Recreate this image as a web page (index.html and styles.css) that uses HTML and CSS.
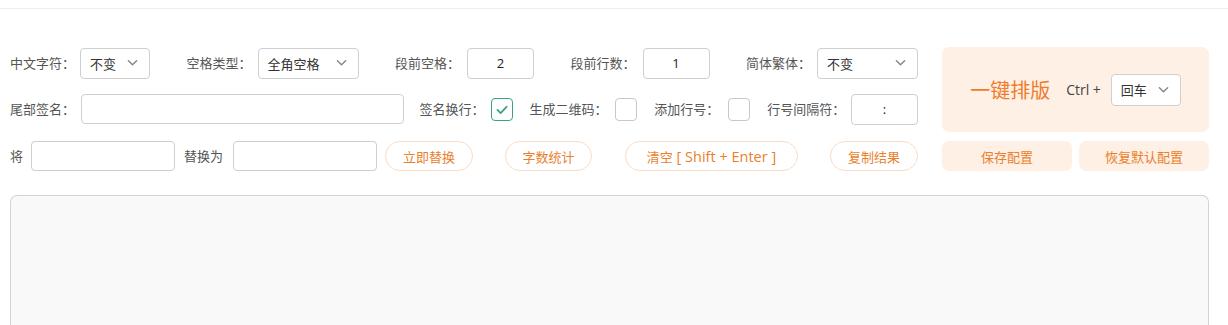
FILE: index.html
```html
<!DOCTYPE html>
<html lang="zh">
<head>
<meta charset="utf-8">
<link rel="stylesheet" href="styles.css">
</head>
<body>
<div class="topbar"></div>
<div class="main">
  <div class="left">
    <div class="row row1">
      <div class="grp g1"><span class="lbl">中文字符：</span><div class="sel w70"><span>不变</span><svg class="chev" viewBox="0 0 12 8"><path d="M1.5 1.5 L6 6 L10.5 1.5" /></svg></div></div>
      <div class="grp g2"><span class="lbl">空格类型：</span><div class="sel w101"><span>全角空格</span><svg class="chev" viewBox="0 0 12 8"><path d="M1.5 1.5 L6 6 L10.5 1.5" /></svg></div></div>
      <div class="grp g3"><span class="lbl">段前空格：</span><div class="inp num w67">2</div></div>
      <div class="grp g3"><span class="lbl">段前行数：</span><div class="inp num w67">1</div></div>
      <div class="grp g2"><span class="lbl">简体繁体：</span><div class="sel w101"><span>不变</span><svg class="chev" viewBox="0 0 12 8"><path d="M1.5 1.5 L6 6 L10.5 1.5" /></svg></div></div>
    </div>
    <div class="row row2">
      <span class="lbl l71">尾部签名：</span><div class="inp sig"></div>
      <span class="lbl l72 ml16">签名换行：</span><div class="cb checked"><svg viewBox="0 0 22 22"><path d="M6 11.5 L9.5 15 L16 8" /></svg></div>
      <span class="lbl l86 ml16">生成二维码：</span><div class="cb"></div>
      <span class="lbl l74 ml17">添加行号：</span><div class="cb"></div>
      <span class="lbl l84 ml17">行号间隔符：</span><div class="inp num w67">:</div>
    </div>
    <div class="row row3">
      <span class="lbl l21">将</span><div class="inp w144"></div>
      <span class="lbl l49 ml9">替换为</span><div class="inp w144"></div>
      <div class="pill ml8 w88">立即替换</div>
      <div class="pill ml32 w87">字数统计</div>
      <div class="pill ml33 w173">清空<span class="latin">&nbsp;[ Shift + Enter ]</span></div>
      <div class="pill ml32 w88">复制结果</div>
    </div>
  </div>
  <div class="right">
    <div class="panel">
      <span class="big">一键排版</span>
      <span class="ctrl">Ctrl +</span>
      <div class="sel w70 white"><span>回车</span><svg class="chev" viewBox="0 0 12 8"><path d="M1.5 1.5 L6 6 L10.5 1.5" /></svg></div>
    </div>
    <div class="btns">
      <div class="sbtn">保存配置</div>
      <div class="sbtn">恢复默认配置</div>
    </div>
  </div>
</div>
<div class="editor"></div>
</body>
</html>
```
FILE: styles.css
```css
* { box-sizing: border-box; }
html, body { margin: 0; padding: 0; background: #fff; }
body {
  font-family: "Open Sans", "Noto Sans CJK SC", sans-serif;
  font-size: 13px;
  color: #555;
  width: 1228px;
  height: 325px;
  overflow: hidden;
}
.topbar { height: 9px; border-bottom: 1px solid #eeeeee; }
.main {
  display: flex;
  padding: 38px 0 0 10px;
  gap: 24px;
}
.left { width: 908px; display: flex; flex-direction: column; }
.row { display: flex; align-items: center; height: 32px; }
.row1 { justify-content: space-between; }
.row2 { margin-top: 14px; }
.row3 { margin-top: 15px; }
.grp { display: flex; align-items: center; }
.g1 { width: 140px; }
.g2 { width: 172px; }
.g3 { width: 139px; }
.grp .lbl { flex: 1; }
.lbl { white-space: nowrap; color: #555; line-height: 20px; }
.l71 { width: 71px; } .l72 { width: 72px; } .l86 { width: 86px; }
.l74 { width: 74px; } .l84 { width: 84px; } .l21 { width: 21px; } .l49 { width: 49px; }
.ml8 { margin-left: 8px; } .ml9 { margin-left: 9px; } .ml16 { margin-left: 16px; } .ml17 { margin-left: 17px; }
.ml32 { margin-left: 32px; } .ml33 { margin-left: 33px; }
.sel, .inp {
  height: 31px;
  border: 1px solid #cfcfcf;
  border-radius: 4px;
  background: #fff;
  display: flex;
  align-items: center;
  color: #333;
  font-size: 13px;
}
.sel { justify-content: space-between; padding: 0 11px 0 9px; }
.chev { width: 11px; height: 8px; }
.chev path { fill: none; stroke: #888; stroke-width: 1.6; stroke-linecap: round; stroke-linejoin: round; }
.num { justify-content: center; color: #222; }
.w70 { width: 70px; } .w101 { width: 101px; } .w67 { width: 67px; }
.w144 { width: 144px; } .w88 { width: 88px; } .w87 { width: 87px; } .w173 { width: 173px; }
.sig { width: 323px; height: 30px; }
.cb {
  width: 22px; height: 23px;
  border: 1px solid #c8c8c8;
  border-radius: 4px;
  background: #fff;
}
.cb.checked { border: 1.5px solid #3aa37f; }
.cb svg { width: 100%; height: 100%; display: block; }
.cb svg path { fill: none; stroke: #3aa37f; stroke-width: 2; stroke-linecap: round; stroke-linejoin: round; }
.row3 .inp { height: 30px; }
.pill {
  height: 30px;
  border: 1px solid #fbdcc4;
  border-radius: 15px;
  color: #ea7f2c;
  display: flex; align-items: center; justify-content: center;
  font-size: 13px;
  white-space: nowrap;
}
.latin { font-size: 14.5px; }
.right { width: 267px; display: flex; flex-direction: column; }
.panel {
  height: 85px;
  background: #fff0e6;
  border-radius: 7px;
  display: flex; align-items: center; justify-content: center;
}
.big { font-size: 20px; color: #f07b2b; margin-right: 16px; }
.ctrl { font-size: 14px; color: #444; margin-right: 10px; }
.panel .sel { height: 32px; }
.btns { display: flex; gap: 7px; margin-top: 9px; }
.sbtn {
  flex: 1;
  height: 30px;
  background: #fff0e6;
  border-radius: 7px;
  color: #ea7f2c;
  display: flex; align-items: center; justify-content: center;
  font-size: 13px;
}
.editor {
  margin: 23px 0 0 10px;
  width: 1199px;
  height: 130px;
  background: #f9f9f9;
  border: 1px solid #d3d3d3;
  border-bottom: 0;
  border-radius: 7px 7px 0 0;
}
```
